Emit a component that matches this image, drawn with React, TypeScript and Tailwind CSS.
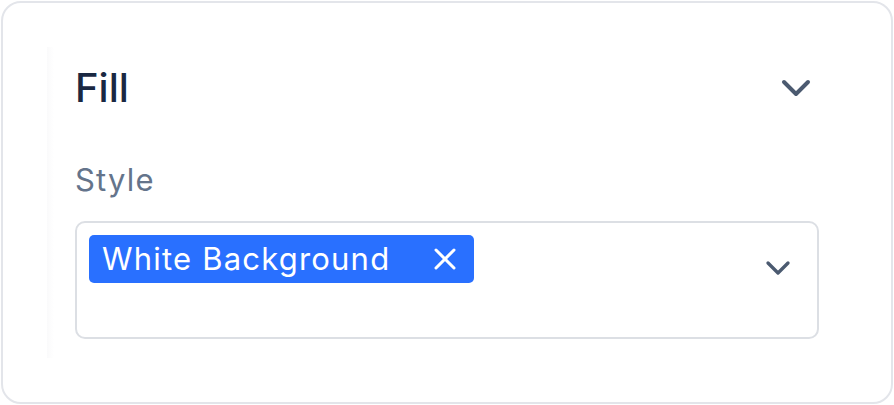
import { ChevronDown, X } from "lucide-react"

export default function App() {
  return (
    <div className="w-[894px] h-[405px] p-px bg-white" style={{ fontFamily: "Inter, 'Liberation Sans', sans-serif" }}>
      <div className="w-[892px] h-[403px] rounded-[20px] border-2 border-[#e3e5ea] bg-white pt-[44px] pl-[44px]">
        <div className="flex">
          <div className="w-[7px] h-[311px] bg-gradient-to-r from-[#fafafb] to-white" />
          <div className="ml-[21px] pt-[17px] w-[745px]">
            <div className="h-[48px] flex items-center justify-between">
              <h2 className="text-[40px] leading-[48px] font-medium text-[#1a2842]">Fill</h2>
              <ChevronDown size={48} strokeWidth={2} className="text-[#4b5a70]" />
            </div>
            <div className="mt-[51px] h-[34px] text-[31px] leading-[34px] tracking-[1.2px] text-[#64748b]">Style</div>
            <div className="mt-[24px] w-[744px] h-[118px] rounded-[10px] border-2 border-[#dcdfe4] flex items-start justify-between pt-[12px] pl-[12px] pr-[19px]">
              <span className="flex items-center h-[48px] rounded-[5px] bg-[#2970ff] text-white pl-[13px] pr-[11px]">
                <span className="text-[31px] leading-[48px] tracking-[1.2px]">White Background</span>
                <X size={36} strokeWidth={2} className="ml-[37px]" />
              </span>
              <ChevronDown size={40} strokeWidth={2} className="mt-[13px] text-[#4b5a70]" />
            </div>
          </div>
        </div>
      </div>
    </div>
  )
}
